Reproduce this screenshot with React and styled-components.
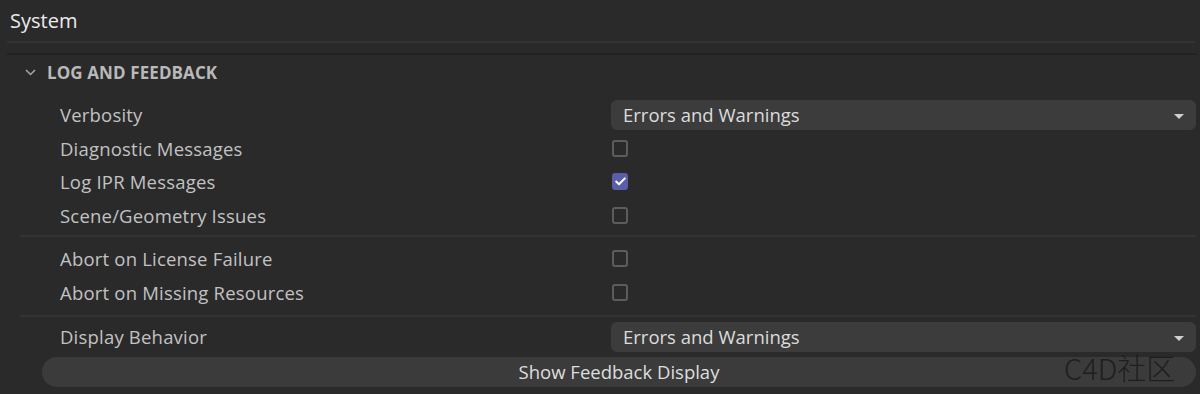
import React from "react";
import styled, { createGlobalStyle } from "styled-components";

const Global = createGlobalStyle`
  html, body { margin: 0; padding: 0; background: #2a2a2a; }
  body { font-family: "Open Sans", "Noto Sans", sans-serif; }
`;

const Page = styled.div`
  position: relative;
  width: 1200px;
  height: 394px;
  background: #2a2a2a;
  overflow: hidden;
  display: flex;
  flex-direction: column;
`;

const TitleBar = styled.div`
  height: 43px;
  display: flex;
  align-items: center;
  box-sizing: border-box;
  font-size: 20px;
  color: #ececec;
  border-bottom: 2px solid #333333;
  margin-right: 5px;
  margin-left: 7px;
  padding-left: 3px;
`;

const Divider = styled.div`
  margin: 10px 3px 0 7px;
  height: 2px;
  background: #222222;
`;

const SectionHeader = styled.div`
  height: 34px;
  display: flex;
  align-items: center;
  gap: 11px;
  padding-left: 25px;
  font-size: 17px;
  font-weight: 700;
  color: #b9b9b9;
  letter-spacing: 0.1px;
`;

const Body = styled.div`
  display: flex;
  flex-direction: column;
  padding-left: 20px;
  padding-right: 4px;
  margin-top: 5px;
`;

const Group = styled.div`
  display: flex;
  flex-direction: column;
  padding: ${(p) => p.$pad || "0"};
  border-bottom: ${(p) => (p.$line ? "2px solid #333333" : "none")};
`;

const Row = styled.div`
  display: grid;
  grid-template-columns: 591px 1fr;
  align-items: center;
  height: 33.5px;
`;

const Label = styled.div`
  padding-left: 40px;
  font-size: 18.5px;
  letter-spacing: 0.2px;
  color: #c2c2c2;
`;

const Select = styled.div`
  height: 30px;
  border-radius: 6px;
  background: #3c3c3c;
  display: flex;
  align-items: center;
  justify-content: space-between;
  padding: 0 12px 0 12px;
  font-size: 18.5px;
  color: #dcdcdc;
`;

const Arrow = styled.span`
  width: 0;
  height: 0;
  border-left: 5px solid transparent;
  border-right: 5px solid transparent;
  border-top: 5px solid #cfcfcf;
  margin-top: 3px;
`;

const Box = styled.div`
  width: 16px;
  height: 17px;
  box-sizing: border-box;
  margin-left: 1px;
  border-radius: 3px;
  border: ${(p) => (p.$checked ? "none" : "2px solid #5c5c5c")};
  background: ${(p) => (p.$checked ? "#5a5ea8" : "transparent")};
  display: flex;
  align-items: center;
  justify-content: center;
`;

const Button = styled.div`
  margin: 3px 0 0 22px;
  height: 30px;
  border-radius: 15px;
  background: #3b3b3b;
  display: flex;
  align-items: center;
  justify-content: center;
  font-size: 18.5px;
  color: #dedede;
`;

const Watermark = styled.div`
  position: absolute;
  left: 1064px;
  top: 346px;
  font-family: "Noto Sans CJK SC", "Noto Sans", sans-serif;
  font-size: 29px;
  font-weight: 300;
  color: rgba(22, 22, 22, 0.8);
  pointer-events: none;
`;

const Check = ({ checked }) => (
  <Box $checked={checked}>
    {checked && (
      <svg width="11" height="9" viewBox="0 0 11 9">
        <path d="M1.2 4.6 L4 7.2 L9.8 1.4" stroke="#ffffff" strokeWidth="2" fill="none" strokeLinecap="round" strokeLinejoin="round" />
      </svg>
    )}
  </Box>
);

const Chevron = () => (
  <svg width="11" height="7" viewBox="0 0 11 7">
    <path d="M1 1 L5.5 5.5 L10 1" stroke="#a8a8a8" strokeWidth="1.5" fill="none" />
  </svg>
);

export default function App() {
  return (
    <Page>
      <Global />
      <TitleBar>System</TitleBar>
      <Divider />
      <SectionHeader>
        <Chevron />
        LOG AND FEEDBACK
      </SectionHeader>
      <Body>
        <Group $line $pad="4px 0 3px 0">
          <Row>
            <Label>Verbosity</Label>
            <Select>
              Errors and Warnings
              <Arrow />
            </Select>
          </Row>
          <Row>
            <Label>Diagnostic Messages</Label>
            <Check />
          </Row>
          <Row>
            <Label>Log IPR Messages</Label>
            <Check checked />
          </Row>
          <Row>
            <Label>Scene/Geometry Issues</Label>
            <Check />
          </Row>
        </Group>
        <Group $line $pad="5px 0 6px 0">
          <Row>
            <Label>Abort on License Failure</Label>
            <Check />
          </Row>
          <Row>
            <Label>Abort on Missing Resources</Label>
            <Check />
          </Row>
        </Group>
        <Group $pad="3px 0 0 0">
          <Row>
            <Label>Display Behavior</Label>
            <Select>
              Errors and Warnings
              <Arrow />
            </Select>
          </Row>
        </Group>
        <Button>Show Feedback Display</Button>
      </Body>
      <Watermark>C4D社区</Watermark>
    </Page>
  );
}
